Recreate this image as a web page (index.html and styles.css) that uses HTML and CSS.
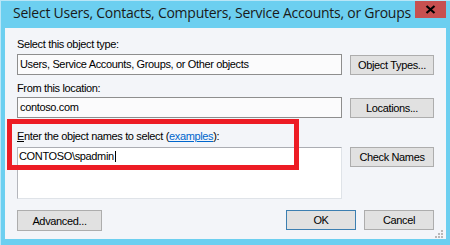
FILE: index.html
```html
<!DOCTYPE html>
<html lang="en">
<head>
    <meta charset="UTF-8">
    <meta name="viewport" content="width=device-width, initial-scale=1.0">
    <title>Select Users, Contacts, Computers, Service Accounts, or Groups</title>
    <link rel="stylesheet" href="styles.css">
</head>
<body>
    <div class="window">
        <div class="titlebar">
            <span class="title">Select Users, Contacts, Computers, Service Accounts, or Groups</span>
            <button class="close" aria-label="Close">
                <svg width="11" height="9" viewBox="0 0 11 9">
                    <path d="M1.5 1 L9.5 8 M9.5 1 L1.5 8" stroke="#000" stroke-width="2.2" fill="none"/>
                </svg>
            </button>
        </div>

        <div class="client">
            <label class="field-label">Select this object type:</label>
            <div class="row">
                <div class="textbox">Users, Service Accounts, Groups, or Other objects</div>
                <button class="btn">Object Types...</button>
            </div>

            <label class="field-label location">From this location:</label>
            <div class="row">
                <div class="textbox">contoso.com</div>
                <button class="btn">Locations...</button>
            </div>

            <label class="field-label names"><u>E</u>nter the object names to select (<a href="#">examples</a>):</label>
            <div class="row">
                <div class="names-box">CONTOSO\spadmin<span class="caret"></span></div>
                <button class="btn check">Check Names</button>
            </div>

            <div class="footer">
                <button class="btn advanced">Advanced...</button>
                <div class="spacer"></div>
                <button class="btn default">OK</button>
                <button class="btn">Cancel</button>
            </div>

            <!-- annotation drawn over the dialog -->
            <div class="highlight"></div>

            <svg class="grip" width="8" height="8" viewBox="0 0 8 8">
                <rect x="6" y="0" width="2" height="2"/>
                <rect x="3" y="3" width="2" height="2"/>
                <rect x="6" y="3" width="2" height="2"/>
                <rect x="0" y="6" width="2" height="2"/>
                <rect x="3" y="6" width="2" height="2"/>
                <rect x="6" y="6" width="2" height="2"/>
            </svg>
        </div>
    </div>
</body>
</html>
```

FILE: styles.css
```css
body {
    margin: 0;
    font-family: "Liberation Sans", Arial, sans-serif;
    background-color: #6ccff0;
}
.window {
    width: 450px;
    height: 245px;
    box-sizing: border-box;
    display: flex;
    flex-direction: column;
    background-color: #6ccff0;
    border-top: 1px solid #b9e6f7;
    border-left: 1px solid #b9e6f7;
}
.titlebar {
    height: 27px;
    display: flex;
    align-items: flex-start;
    padding-left: 12px;
}
.title {
    min-width: 0;
    margin-top: 2px;
    font-family: "Open Sans", sans-serif;
    font-size: 14px;
    line-height: 20px;
    letter-spacing: -0.25px;
    color: #1a1a1a;
    white-space: nowrap;
}
.close {
    flex-shrink: 0;
    margin-left: auto;
    margin-right: 4px;
    width: 31px;
    height: 17px;
    padding: 0;
    border: none;
    background-color: #c75050;
    display: flex;
    align-items: center;
    justify-content: center;
}
.client {
    flex: 1;
    position: relative;
    margin: 0 4px 6px 4px;
    padding: 9px 12px 0 12px;
    background-color: #f3f5f9;
    display: flex;
    flex-direction: column;
}
.field-label {
    display: block;
    font-size: 11px;
    line-height: 14px;
    letter-spacing: -0.35px;
    color: #000;
    margin-bottom: 3px;
}
.field-label.location {
    margin-top: 6px;
    margin-bottom: 2px;
}
.field-label.names {
    margin-top: 11px;
    margin-bottom: 4px;
}
.field-label a {
    color: #0066cc;
}
.row {
    display: flex;
    gap: 8px;
    align-items: flex-start;
}
.textbox {
    width: 325px;
    height: 21px;
    box-sizing: border-box;
    border: 1px solid #8e8e8e;
    background-color: #fbfbfc;
    padding: 0 2px;
    font-size: 11px;
    line-height: 19px;
    letter-spacing: -0.35px;
    white-space: nowrap;
}
.names-box {
    width: 325px;
    height: 52px;
    box-sizing: border-box;
    border: 1px solid #dfe3e8;
    border-top-color: #abadb3;
    border-left-color: #b4b6bc;
    background-color: #fff;
    padding: 1px 1px;
    font-size: 11px;
    line-height: 14px;
    letter-spacing: -0.35px;
}
.caret {
    display: inline-block;
    width: 1px;
    height: 11px;
    margin-left: 1px;
    vertical-align: -2px;
    background-color: #000;
}
.btn {
    width: 84px;
    height: 20px;
    margin-top: 1px;
    padding: 0;
    box-sizing: border-box;
    border: 1px solid #adadad;
    background-color: #e1e1e1;
    font-family: "Liberation Sans", Arial, sans-serif;
    font-size: 11px;
    letter-spacing: -0.35px;
    color: #000;
}
.btn.check {
    margin-top: 0;
}
.footer {
    display: flex;
    gap: 8px;
    margin-top: 10px;
}
.spacer {
    flex: 1;
}
.footer .btn {
    width: 70px;
}
.footer .btn.advanced {
    width: 85px;
    height: 21px;
}
.btn.default {
    border-color: #3c7fb1;
}
.highlight {
    position: absolute;
    left: 2px;
    top: 91px;
    width: 292px;
    height: 51px;
    box-sizing: border-box;
    border: 5px solid #ed1c24;
}
.grip {
    position: absolute;
    right: 3px;
    bottom: 1px;
    fill: #b8b8b8;
}
```
